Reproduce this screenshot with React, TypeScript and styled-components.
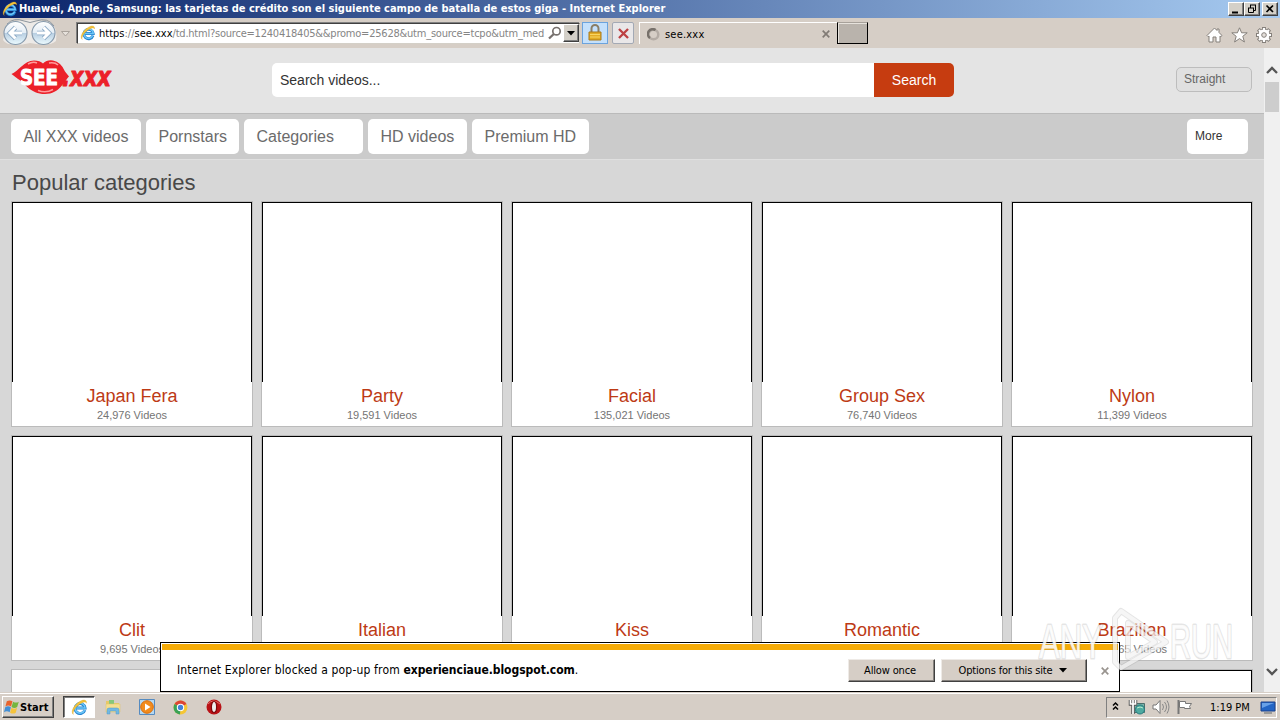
import styled, { createGlobalStyle } from 'styled-components';

const GlobalStyle = createGlobalStyle`
	* {
		box-sizing: border-box;
	}
	body {
		margin: 0;
		overflow: hidden;
		font-family: 'Liberation Sans', Arial, sans-serif;
	}
	svg {
		display: block;
		flex-shrink: 0;
	}
`;

const Screen = styled.div`
	position: relative;
	display: flex;
	flex-direction: column;
	width: 1280px;
	height: 720px;
	overflow: hidden;
	background: #d4d0c8;
`;

const UiText = styled.span<{ $size?: number; $spacing?: number; $bold?: boolean; $color?: string }>`
	font-family: 'DejaVu Sans Condensed', 'DejaVu Sans', sans-serif;
	font-stretch: condensed;
	font-size: ${({ $size }) => $size || 11}px;
	font-weight: ${({ $bold }) => ($bold ? 700 : 400)};
	letter-spacing: ${({ $spacing }) => $spacing || 0}px;
	color: ${({ $color }) => $color || '#000'};
	white-space: pre;
`;

const TitleBar = styled.div`
	display: flex;
	align-items: center;
	height: 18px;
	padding: 0 2px;
	background: linear-gradient(90deg, #0a246a 0%, #a6caf0 100%);
`;

const TitleLabel = styled(UiText)`
	flex: 1;
	margin-left: 1px;
	line-height: 18px;
`;

const WindowButton = styled.div<{ $gap?: number }>`
	display: flex;
	width: 16px;
	height: 14px;
	margin-left: ${({ $gap }) => $gap || 0}px;
	background: #d4d0c8;
	border: 1px solid;
	border-color: #fff #404040 #404040 #fff;
	box-shadow: inset -1px -1px #808080;
`;

const NavBar = styled.div`
	display: flex;
	align-items: center;
	height: 30px;
	padding: 0 8px 0 2px;
	background: #d6cec6;
`;

const AddressBox = styled.div`
	display: flex;
	align-items: center;
	width: 503px;
	height: 21px;
	margin-left: 5px;
	padding: 0 0 0 2px;
	background: #fff;
	border: 1px solid;
	border-color: #404040 #d4d0c8 #d4d0c8 #404040;
	box-shadow: -1px -1px #808080;
`;

const Url = styled.div`
	flex: 1;
	margin-left: 3px;
	line-height: 16px;
	white-space: nowrap;
`;

const DropButton = styled.div`
	display: flex;
	align-items: center;
	justify-content: center;
	width: 16px;
	height: 18px;
	margin-left: 1px;
	background: #d4d0c8;
	border: 1px solid;
	border-color: #fff #404040 #404040 #fff;
	box-shadow: inset -1px -1px #808080;
`;

const ToolButton = styled.div<{ $active?: boolean }>`
	display: flex;
	align-items: center;
	justify-content: center;
	width: ${({ $active }) => ($active ? 26 : 22)}px;
	height: 22px;
	margin-left: ${({ $active }) => ($active ? 2 : 4)}px;
	background: ${({ $active }) => ($active ? '#c4e0fb' : '#e9e7e8')};
	border: 1px solid ${({ $active }) => ($active ? '#6ba3dd' : '#a3a9b4')};
	border-radius: ${({ $active }) => ($active ? 0 : 2)}px;
`;

const BrowserTab = styled.div`
	display: flex;
	align-items: center;
	width: 198px;
	height: 22px;
	margin-left: 5px;
	padding: 1px 7px 0;
	border-top: 1px solid #fff;
	border-left: 1px solid #fff;
`;

const TabTitle = styled(UiText)`
	flex: 1;
	margin-left: 5px;
`;

const NewTab = styled.div`
	width: 31px;
	height: 22px;
	background: #b9b3ac;
	border: 1px solid #000;
	border-top-color: #a7a19a;
	box-shadow: inset 1px 1px #e6e2dc;
`;

const NavTools = styled.div`
	display: flex;
	gap: 8px;
	margin: 4px 0 0 auto;
`;

const Viewport = styled.div`
	display: flex;
	height: 644px;
	overflow: hidden;
`;

const Page = styled.div`
	width: 1264px;
	height: 644px;
	overflow: hidden;
	background: #d7d7d7;
`;

const Header = styled.header`
	display: flex;
	align-items: flex-start;
	height: 65px;
	padding: 11px 12px 0 11px;
	background: #e4e4e4;
`;

const SearchForm = styled.div`
	display: flex;
	width: 682px;
	height: 34px;
	margin: 4px 0 0 159px;
	border-radius: 5px;
	overflow: hidden;
	font-size: 14px;
	line-height: 34px;
`;

const SearchInput = styled.div`
	flex: 1;
	padding-left: 8px;
	background: #fff;
	color: #333;
`;

const SearchButton = styled.div`
	width: 80px;
	background: #c63c10;
	color: #fff;
	text-align: center;
`;

const Orientation = styled.div`
	width: 76px;
	height: 25px;
	margin: 8px 0 0 auto;
	padding-left: 7px;
	border: 1px solid #bdbdbd;
	border-radius: 5px;
	background: #e0e0e0;
	color: #666;
	font-size: 12px;
	line-height: 22px;
`;

const Menu = styled.nav`
	display: flex;
	gap: 5px;
	height: 47px;
	padding: 5px 16px 0 11px;
	background: #cbcbcb;
	border-top: 1px solid #bababa;
	border-bottom: 1px solid #e0e0e0;
`;

const MenuItem = styled.div<{ $width: number }>`
	width: ${({ $width }) => $width}px;
	height: 35px;
	padding-left: 12.5px;
	border-radius: 5px;
	background: #fff;
	color: #6b6b6b;
	font-size: 16px;
	line-height: 35px;
	white-space: nowrap;
`;

const MoreItem = styled(MenuItem)`
	margin-left: auto;
	padding-left: 8px;
	color: #333;
	font-size: 12px;
`;

const Heading = styled.h1`
	height: 41px;
	margin: 0;
	padding: 2px 0 0 12px;
	color: #484848;
	font-size: 22px;
	font-weight: 400;
	line-height: 41px;
`;

const Grid = styled.div`
	display: grid;
	grid-template-columns: repeat(5, 242px);
	gap: 8px;
	padding-left: 11px;
`;

const Card = styled.div`
	height: 226px;
	border: 1px solid #bbb;
	background: #fff;
	text-align: center;
`;

const Thumb = styled.div<{ $loaded?: boolean }>`
	height: 180px;
	border: 1px solid ${({ $loaded }) => ($loaded ? '#fff' : '#000')};
	border-bottom: 0;
`;

const CardTitle = styled.div`
	margin-top: 4px;
	color: #bd3a15;
	font-size: 18px;
	line-height: 20px;
`;

const CardCount = styled.div`
	color: #747474;
	font-size: 11px;
	line-height: 18px;
`;

const ScrollBar = styled.div`
	display: flex;
	flex-direction: column;
	align-items: center;
	width: 16px;
	height: 644px;
	padding: 17px 0 15px;
	background: #f0f0f0;
`;

const ScrollThumb = styled.div`
	width: 14px;
	height: 30px;
	margin: 7px 0 auto;
	background: #cdcdcd;
`;

const Notification = styled.div`
	position: absolute;
	left: 160px;
	top: 642px;
	width: 960px;
	height: 50px;
	padding: 1px;
	border: 1px solid #000;
	background: #fff;
`;

const NoticeStripe = styled.div`
	height: 6px;
	background: #f5ab07;
`;

const NoticeRow = styled.div`
	display: flex;
	align-items: center;
	height: 40px;
	padding: 0 9px 0 15px;
`;

const NoticeText = styled.div`
	flex: 1;
	height: 18px;
	line-height: 16px;
`;

const NoticeButton = styled.div<{ $width: number }>`
	display: flex;
	align-items: center;
	justify-content: center;
	gap: 6px;
	width: ${({ $width }) => $width}px;
	height: 23px;
	margin-left: 6px;
	padding: 1px 3px 0 0;
	background: #d6cec6;
	border: 1px solid;
	border-color: #eeeae6 #404040 #404040 #eeeae6;
	box-shadow: inset -1px -1px #85817d;
`;

const NoticeClose = styled.div`
	margin: 2px 0 0 14px;
`;

const TaskBar = styled.div`
	display: flex;
	align-items: center;
	height: 28px;
	padding: 2px 3px 0 2px;
	background: #d6cec6;
	box-shadow: inset 0 1px #d6cec6, inset 0 2px #fff;
`;

const StartButton = styled.div`
	display: flex;
	align-items: center;
	width: 52px;
	height: 22px;
	padding-left: 1px;
	border: 1px solid;
	border-color: #fff #404040 #404040 #fff;
	box-shadow: inset -1px -1px #808080;
`;

const QuickLaunch = styled.div`
	display: flex;
	align-items: center;
	gap: 16px;
	margin-left: 9px;
`;

const ActiveTask = styled.div`
	display: flex;
	align-items: center;
	justify-content: center;
	width: 32px;
	height: 22px;
	margin-right: -7px;
	background: #fff;
	border: 1px solid;
	border-color: #404040 #fff #fff #404040;
	box-shadow: inset 1px 1px #808080;
`;

const Tray = styled.div`
	display: flex;
	align-items: center;
	width: 171px;
	height: 21px;
	margin-left: auto;
	padding-left: 5px;
	border: 1px solid;
	border-color: #808080 #fff #fff #808080;
`;

const Clock = styled(UiText)`
	margin: 0 10px;
`;

const Watermark = styled.svg`
	position: absolute;
	left: 1034px;
	top: 602px;
	pointer-events: none;
`;

const IeIcon = ({ size = 16 }: { size?: number }) => (
	<svg width={size} height={size} viewBox="0 0 16 16" fill="none">
		<path d="M13 10.500A4.700 4.700 0 1 1 13.200 8.500H5" stroke="#2382d0" strokeWidth="2.800" />
		<path d="M12.800 10.500A4.700 4.700 0 1 1 13.200 8.400H5" stroke="#6cc6f7" strokeWidth="1.500" />
		<path
			d="M2.200 14.500C-.8 12.200 3 5.200 8.500 2.200c4-2.200 6.500-1.200 6 1.800-.4-1.700-2.700-1.400-5.700.5C4.500 7.200 1.200 11.800 2.200 14.500Z"
			fill="#f3c33b"
			stroke="#d69b1c"
			strokeWidth=".3"
		/>
	</svg>
);

const CloseGlyph = ({ color = '#817b75', size = 8 }: { color?: string; size?: number }) => (
	<svg width={size} height={size} viewBox="0 0 8 8">
		<path d="M.7.7l6.600 6.600M7.300.7L.7 7.300" stroke={color} strokeWidth="1.700" />
	</svg>
);

const BackForward = () => (
	<svg width="70" height="30" viewBox="0 0 70 30">
		<defs>
			<linearGradient id="orb" x1="0" y1="0" x2="0" y2="1">
				<stop offset="0" stopColor="#fff" />
				<stop offset=".48" stopColor="#e4edf5" />
				<stop offset=".52" stopColor="#b9cfe2" />
				<stop offset="1" stopColor="#ecfbff" />
			</linearGradient>
		</defs>
		<path d="M6 4Q28 0 48 4Q56 9 54 23Q48 29 28 25Q6 30 1 22Z" fill="#edeae7" />
		<path d="M5 6Q12-1 22 3q6 3 12 0Q46-1 52 8" fill="none" stroke="#8d969e" />
		{[13.500, 41.500].map((cx) => (
			<circle key={cx} cx={cx} cy="15" r="11.500" fill="url(#orb)" stroke="#8699ab" strokeWidth="1.100" />
		))}
		<g fill="none" stroke="#8ba9c5" strokeWidth="4.600">
			<path d="M20 15H8M13.500 9.500L8 15l5.500 5.500M35 15h12M41.500 9.500L47 15l-5.500 5.500" />
		</g>
		<g fill="none" stroke="#fff" strokeWidth="3">
			<path d="M20 15H8M13.500 9.500L8 15l5.500 5.500M35 15h12M41.500 9.500L47 15l-5.500 5.500" />
		</g>
		<path d="M59.500 13.500h8l-4 4.500z" fill="#e6e1db" stroke="#aaa39c" />
	</svg>
);

const LipsLogo = () => (
	<svg width="102" height="37" viewBox="0 0 102 37">
		<path
			d="M.5 15C7 13 13 1.500 23 1.500q6 0 9 3 4-4 10-3 8 1.500 12 11l4 5C54 21 49 35 34 35 19 35 14 24 7 20Z"
			fill="#ec2029"
		/>
		<path d="M17 5q5-3 9-1M38 4q6-1 9 2M27 31.500q8 3 15-1" fill="none" stroke="#ff9c9c" strokeWidth="1.500" />
		<g fontFamily="'DejaVu Sans', sans-serif" fontWeight="700" strokeLinejoin="round">
			<text x="9" y="26" fontSize="21" textLength="38" lengthAdjust="spacingAndGlyphs" fill="#fff" stroke="#fff" strokeWidth="1">
				SEE
			</text>
			<text
				x="51"
				y="26.500"
				fontSize="27"
				fontStyle="italic"
				textLength="49"
				lengthAdjust="spacingAndGlyphs"
				fill="#ec2029"
				stroke="#ec2029"
				strokeWidth="1"
			>
				.xxx
			</text>
		</g>
	</svg>
);

const SearchGlyph = () => (
	<svg width="14" height="14" viewBox="0 0 14 14" fill="none" stroke="#77716e">
		<circle cx="8.500" cy="5.200" r="3.700" strokeWidth="1.700" />
		<path d="M5.800 8L1 12.500" strokeWidth="2.300" />
	</svg>
);

const LockGlyph = () => (
	<svg width="14" height="18" viewBox="0 0 14 18">
		<path d="M3.500 8V4.500a3.500 3.500 0 0 1 7 0V8" fill="none" stroke="#8a7e66" strokeWidth="2" />
		<path d="M1 8h12v8H1z" fill="#e3ac25" stroke="#a9781a" />
		<path d="M2 10.500h10M2 13h10" stroke="#f8d565" />
	</svg>
);

const HomeGlyph = () => (
	<svg width="17" height="16" viewBox="0 0 17 16">
		<path
			d="M1 8.500L8.500 1 11 3.500V2h2v3.500L16 8.500 14.800 9.700 14 9v6h-4v-5H7v5H3V9l-.8.700Z"
			fill="#fff"
			stroke="#85807b"
		/>
	</svg>
);

const StarGlyph = () => (
	<svg width="17" height="16" viewBox="0 0 17 16">
		<path
			d="M8.500.8l2.100 5h5.600l-4.400 3.500 1.600 5.700-4.900-3.400L3.600 15l1.600-5.700L.8 5.800h5.600z"
			fill="#fff"
			stroke="#85807b"
		/>
	</svg>
);

const GearGlyph = () => (
	<svg width="16" height="16" viewBox="0 0 16 16">
		<g stroke="#85807b" strokeWidth="4">
			<path d="M8 0v16M0 8h16M2.300 2.300l11.400 11.400M13.700 2.300L2.300 13.700" />
		</g>
		<circle cx="8" cy="8" r="6" fill="#fff" stroke="#85807b" />
		<path d="M8 1v14M1 8h14M3 3l10 10M13 3L3 13" stroke="#fff" strokeWidth="2.200" />
		<circle cx="8" cy="8" r="2.300" fill="#e4dfda" stroke="#85807b" />
	</svg>
);

const FlagLogo = () => (
	<svg width="16" height="16" viewBox="0 0 17 16">
		<path d="M3 2q3-2 6 0L7.500 7.500q-3-2-6 0Z" fill="#e8632c" />
		<path d="M9.700 2.300q3 2 6 0L14 8q-3 2-6 0Z" fill="#75b63e" />
		<path d="M1.300 8.300q3-2 6 0L6 13.500q-3-2-6 0Z" fill="#438fd5" />
		<path d="M7.900 8.800q3 2 6 0L12.500 14q-3 2-6 0Z" fill="#f5c33c" />
	</svg>
);

const FolderIcon = () => (
	<svg width="18" height="18" viewBox="0 0 18 18">
		<path d="M2 3h5l1 2h7v9H2z" fill="#e8c967" />
		<path d="M5 2h5v5H5z" fill="#86c87a" />
		<path d="M2 6h14v8H2z" fill="#f5df91" stroke="#dcc06a" strokeWidth=".5" />
		<path d="M3 16v-4q0-2 2-2h8q2 0 2 2v4h-3v-3H6v3z" fill="#72b8e2" stroke="#5299c5" strokeWidth=".5" />
	</svg>
);

const PlayerIcon = () => (
	<svg width="18" height="18" viewBox="0 0 18 18">
		<path d="M1.500 1.500h15v15h-15z" fill="#b5d8f1" stroke="#568bc0" />
		<circle cx="9" cy="9" r="6.300" fill="#f28b1c" stroke="#d86d0c" />
		<path d="M7 5.500l5.500 3.500L7 12.500z" fill="#fff" />
	</svg>
);

const ChromeIcon = () => (
	<svg width="17" height="17" viewBox="0 0 16 16">
		<circle cx="8" cy="8" r="6.500" fill="#f5c634" />
		<path d="M8 8L2.400 4.700A6.500 6.500 0 0 1 13.600 4.700Z" fill="#dc4534" />
		<path d="M8 8L2.400 4.700A6.500 6.500 0 0 0 7.500 14.500Z" fill="#3aa256" />
		<circle cx="8" cy="8" r="3" fill="#4382d8" stroke="#fff" />
	</svg>
);

const OperaIcon = () => (
	<svg width="18" height="18" viewBox="0 0 18 18">
		<circle cx="9" cy="9" r="7.500" fill="#b91216" />
		<path d="M3 6q5-6 12 0" fill="none" stroke="#e56d67" />
		<ellipse cx="9" cy="9" rx="2.600" ry="5.500" fill="#eee" stroke="#7b080c" strokeWidth="1.200" />
	</svg>
);

const TrayIcons = () => (
	<svg width="88" height="18" viewBox="0 0 88 18" fill="none">
		<path d="M1 7.500L3.500 5 6 7.500M1 11.500L3.500 9 6 11.500" stroke="#000" strokeWidth="1.500" />
		<path d="M20.500 5.500h12v9h-12z" fill="#75b2a8" stroke="#4c6e6c" />
		<path d="M18.500 2v4h5V2M21 2v14" stroke="#555" strokeWidth="3.500" />
		<path d="M18.500 2v4h5V2M21 2v14" stroke="#fff" strokeWidth="1.700" />
		<circle cx="28" cy="11.500" r="4.500" fill="#4faaa0" stroke="#277b7f" />
		<path d="M25 10q3-2 6 0" stroke="#b8ebcd" />
		<path d="M41 7h3l4-4.500v13L44 11h-3z" fill="#fff" stroke="#777" />
		<path d="M50.500 6q2 3 0 6M52.500 4q4 5 0 10M55 2.500q4 6.500 0 13" stroke="#888" />
		<path d="M66.500 2v14" stroke="#777" strokeWidth="2" />
		<path d="M67.500 3.500h6v2h6l-2 3 1 2h-6v-1h-5z" fill="#fff" stroke="#777" />
	</svg>
);

const MonitorIcon = () => (
	<svg width="16" height="16" viewBox="0 0 16 16">
		<path d="M1 3h14v9H1z" fill="#2365c5" stroke="#1d438c" />
		<path d="M2 4h12L2 9z" fill="#68a1e8" />
		<path d="M4 14h8" stroke="#9b9a98" strokeWidth="2" />
	</svg>
);

const menuItems = [
	{ label: 'All XXX videos', width: 130 },
	{ label: 'Pornstars', width: 93 },
	{ label: 'Categories', width: 119 },
	{ label: 'HD videos', width: 99 },
	{ label: 'Premium HD', width: 117 },
];

const categories = [
	['Japan Fera', '24,976 Videos'],
	['Party', '19,591 Videos'],
	['Facial', '135,021 Videos'],
	['Group Sex', '76,740 Videos'],
	['Nylon', '11,399 Videos'],
	['Clit', '9,695 Videos'],
	['Italian', ''],
	['Kiss', ''],
	['Romantic', ''],
	['Brazilian', '10,365 Videos'],
	['', ''],
	['', ''],
	['', ''],
	['', ''],
	['', ''],
];

const App = () => {
	return (
		<Screen>
			<GlobalStyle />
			<TitleBar>
				<IeIcon />
				<TitleLabel $bold $color="#fff">
					Huawei, Apple, Samsung: las tarjetas de crédito son el siguiente campo de batalla de estos giga - Internet Explorer
				</TitleLabel>
				<WindowButton>
					<svg width="14" height="12">
						<path d="M3 9.500h6" stroke="#000" strokeWidth="2" />
					</svg>
				</WindowButton>
				<WindowButton>
					<svg width="14" height="12" fill="none" stroke="#000">
						<path d="M5 2h6M5.500 2v3M10.500 2v5.500H8.500M3 5h6M3.500 5v4.500h5V5" />
					</svg>
				</WindowButton>
				<WindowButton $gap={2}>
					<svg width="14" height="12">
						<path d="M3.500 2.500l6.500 6.500M10 2.500L3.500 9" stroke="#000" strokeWidth="1.700" />
					</svg>
				</WindowButton>
			</TitleBar>
			<NavBar>
				<BackForward />
				<AddressBox>
					<IeIcon />
					<Url>
						<UiText>https</UiText>
						<UiText $color="#858585">://</UiText>
						<UiText>see.xxx</UiText>
						<UiText $spacing={-0.22} $color="#858585">
							/td.html?source=1240418405&&promo=25628&utm_source=tcpo&utm_med
						</UiText>
					</Url>
					<SearchGlyph />
					<DropButton>
						<svg width="8" height="5">
							<path d="M0 0h8L4 4.500z" />
						</svg>
					</DropButton>
				</AddressBox>
				<ToolButton $active>
					<LockGlyph />
				</ToolButton>
				<ToolButton>
					<CloseGlyph color="#bd4143" size={11} />
				</ToolButton>
				<BrowserTab>
					<svg width="13" height="13" viewBox="0 0 13 13" fill="none" strokeWidth="2.500">
						<circle cx="6.500" cy="6.500" r="4.800" stroke="#b4aca5" />
						<path d="M3 10A4.800 4.800 0 0 1 8.500 2" stroke="#77716b" />
					</svg>
					<TabTitle $spacing={0.2}>see.xxx</TabTitle>
					<CloseGlyph />
				</BrowserTab>
				<NewTab />
				<NavTools>
					<HomeGlyph />
					<StarGlyph />
					<GearGlyph />
				</NavTools>
			</NavBar>
			<Viewport>
				<Page>
					<Header>
						<LipsLogo />
						<SearchForm>
							<SearchInput>Search videos...</SearchInput>
							<SearchButton>Search</SearchButton>
						</SearchForm>
						<Orientation>Straight</Orientation>
					</Header>
					<Menu>
						{menuItems.map(({ label, width }) => (
							<MenuItem key={label} $width={width}>
								{label}
							</MenuItem>
						))}
						<MoreItem $width={61}>More</MoreItem>
					</Menu>
					<Heading>Popular categories</Heading>
					<Grid>
						{categories.map(([title, count], index) => (
							<Card key={index}>
								<Thumb $loaded={index === 10} />
								<CardTitle>{title}</CardTitle>
								<CardCount>{count}</CardCount>
							</Card>
						))}
					</Grid>
				</Page>
				<ScrollBar>
					<svg width="12" height="10" viewBox="0 0 12 10">
						<path d="M1 8l5-5 5 5" fill="none" stroke="#555" strokeWidth="2.300" />
					</svg>
					<ScrollThumb />
					<svg width="12" height="10" viewBox="0 0 12 10">
						<path d="M1 2l5 5 5-5" fill="none" stroke="#555" strokeWidth="2.300" />
					</svg>
				</ScrollBar>
			</Viewport>
			<TaskBar>
				<StartButton>
					<FlagLogo />
					<UiText $bold $spacing={0.1}>
						Start
					</UiText>
				</StartButton>
				<QuickLaunch>
					<ActiveTask>
						<IeIcon size={17} />
					</ActiveTask>
					<FolderIcon />
					<PlayerIcon />
					<ChromeIcon />
					<OperaIcon />
				</QuickLaunch>
				<Tray>
					<TrayIcons />
					<Clock>1:19 PM</Clock>
					<MonitorIcon />
				</Tray>
			</TaskBar>
			<Notification>
				<NoticeStripe />
				<NoticeRow>
					<NoticeText>
						<UiText $size={12} $spacing={0.17}>
							{'Internet Explorer blocked a pop-up from '}
						</UiText>
						<UiText $size={12} $bold $spacing={-0.04}>
							experienciaue.blogspot.com
						</UiText>
						<UiText $size={12}>.</UiText>
					</NoticeText>
					<NoticeButton $width={87}>
						<UiText $spacing={-0.15}>Allow once</UiText>
					</NoticeButton>
					<NoticeButton $width={146}>
						<UiText $spacing={-0.15}>Options for this site</UiText>
						<svg width="8" height="5">
							<path d="M0 0h8L4 4.500z" />
						</svg>
					</NoticeButton>
					<NoticeClose>
						<CloseGlyph color="#99948f" />
					</NoticeClose>
				</NoticeRow>
			</Notification>
			<Watermark width="206" height="76" viewBox="0 0 206 76">
				<g
					fontFamily="'Liberation Sans', sans-serif"
					fontSize="48"
					fill="#fff"
					fillOpacity=".85"
					stroke="#999"
					strokeOpacity=".25"
					strokeWidth="3"
					strokeLinejoin="round"
					paintOrder="stroke"
				>
					<text x="5" y="56" textLength="64" lengthAdjust="spacingAndGlyphs">
						ANY
					</text>
					<text x="136" y="56" textLength="63" lengthAdjust="spacingAndGlyphs">
						RUN
					</text>
				</g>
				<g fill="none" strokeLinejoin="round">
					<path d="M81 16v44l6 6 45-26-45-31ZM94 21v34l27-15Z" stroke="#999" strokeOpacity=".25" strokeWidth="6" />
					<path d="M81 16v44l6 6 45-26-45-31ZM94 21v34l27-15Z" stroke="#fff" strokeOpacity=".65" strokeWidth="4" />
				</g>
			</Watermark>
		</Screen>
	);
};

export default App;
